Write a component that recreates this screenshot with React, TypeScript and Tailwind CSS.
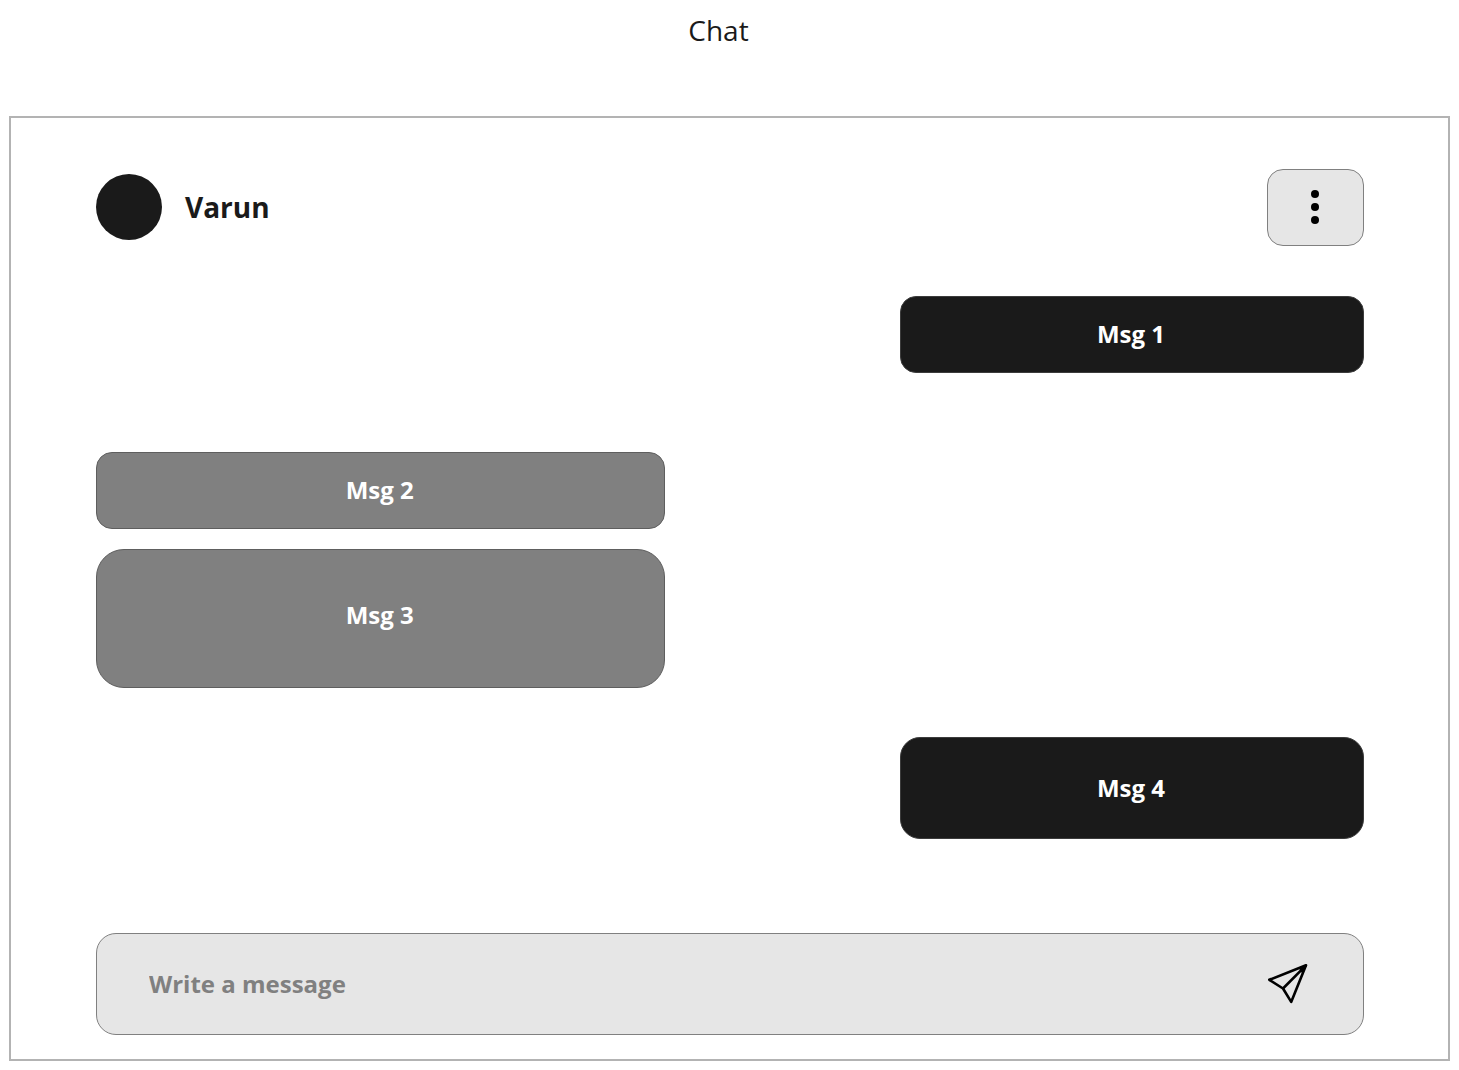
import type { ReactNode } from "react";

function Bubble({ mine, shape, children }: { mine?: boolean; shape: string; children: ReactNode }) {
  const look = mine
    ? "self-end w-[36.6%] bg-[#1a1a1a] border-[#3c3c3c]"
    : "self-start w-[44.9%] bg-[#808080] border-[#5e5e5e]";
  return (
    <li className={`flex items-center justify-center border pr-0.5 text-2xl font-bold text-white ${look} ${shape}`}>
      {children}
    </li>
  );
}

function SendIcon() {
  return (
    <svg viewBox="0 0 40 40" className="size-10" fill="none" stroke="#000" strokeWidth="2.6" strokeLinejoin="round" aria-hidden="true">
      <path d="M38 1.3 L1.3 15.8 L15 24.5 L23.2 37.9 Z" />
      <path d="M38 1.3 L15 24.5" />
      <path d="M38 1.3 L31 4.5 L35 10.5 Z" fill="#000" stroke="none" />
    </svg>
  );
}

export default function App() {
  return (
    <div className="flex flex-col bg-white px-[9px] pb-[9px] font-['Open_Sans',sans-serif] text-[#1a1a1a]">
      <h1 className="mr-[22px] pt-[10px] text-center text-[28px] leading-10">Chat</h1>
      <main className="mt-[66px] flex flex-col border-2 border-[#b3b3b3] pt-[51px] pr-[84px] pb-6 pl-[85px]">
        <header className="flex items-center justify-between">
          <div className="flex items-center gap-[23px] pb-0.5">
            <span className="size-[66px] rounded-full bg-[#1a1a1a]" />
            <h2 className="text-[28px] leading-10 font-bold">Varun</h2>
          </div>
          <button type="button" aria-label="More options" className="flex h-[77px] w-[97px] items-center justify-center rounded-2xl border border-[#808080] bg-[#e6e6e6] pr-0.5 pb-0.5">
            <svg viewBox="0 0 8 34" className="h-[34px] w-2" fill="#000" aria-hidden="true">
              <circle cx="4" cy="4" r="4" />
              <circle cx="4" cy="17" r="4" />
              <circle cx="4" cy="30" r="4" />
            </svg>
          </button>
        </header>
        <ul className="mt-[50px] flex flex-col">
          <Bubble mine shape="h-[77px] rounded-2xl pb-0.5">Msg 1</Bubble>
          <Bubble shape="mt-[79px] h-[77px] rounded-2xl pb-0.5">Msg 2</Bubble>
          <Bubble shape="mt-5 h-[139px] rounded-[28px] pb-2">Msg 3</Bubble>
          <Bubble mine shape="mt-[49px] h-[102px] rounded-[20px]">Msg 4</Bubble>
        </ul>
        <form className="mt-[94px] flex h-[102px] items-center rounded-[20px] border border-[#808080] bg-[#e6e6e6] pr-[55px] pb-px pl-[52px]" onSubmit={(e) => e.preventDefault()}>
          <input aria-label="Write a message" placeholder="Write a message" className="min-w-0 flex-1 bg-transparent text-2xl font-bold outline-none placeholder:text-[#808080]" />
          <button type="submit" aria-label="Send">
            <SendIcon />
          </button>
        </form>
      </main>
    </div>
  );
}
